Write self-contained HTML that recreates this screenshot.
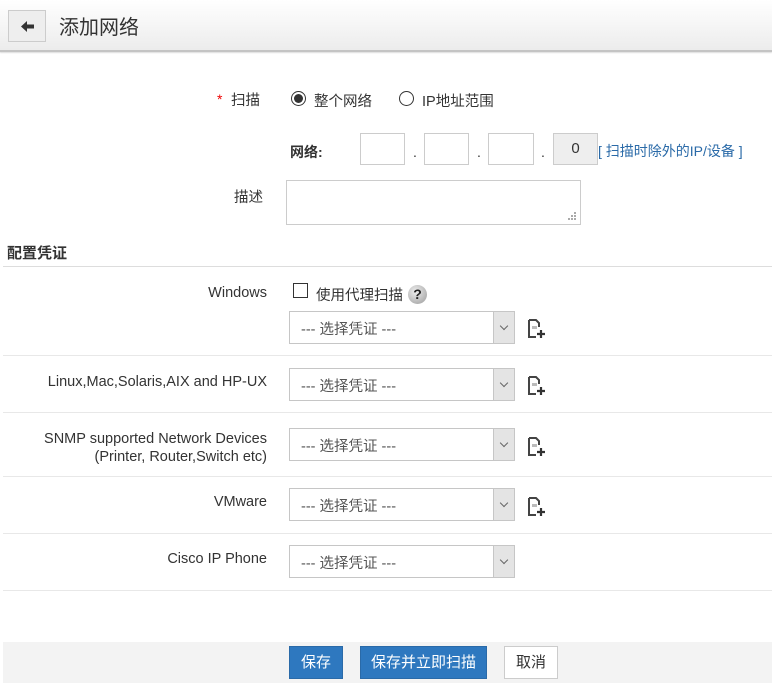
<!DOCTYPE html>
<html><head><meta charset="utf-8"><style>
*{box-sizing:border-box;margin:0;padding:0}
body{width:772px;height:683px;position:relative;background:#fff;font-family:"Liberation Sans","Noto Sans CJK SC",sans-serif;font-size:14px;color:#333;overflow:hidden}
.a{position:absolute}
.hdr{left:0;top:0;width:772px;height:52px;background:linear-gradient(#fff,#ececec);border-bottom:2px solid #c4c4c4;box-shadow:0 1px 1px #ddd}
.back{left:8px;top:10px;width:38px;height:32px;border:1px solid #ccc;background:#eee}
.lbl{text-align:right;width:267px;left:0;font-size:14.5px}
.box{border:1px solid #ccc;background:#fff}
.sel{width:226px;height:33px;border:1px solid #c6c6c6;background:#fff;color:#555;font-size:14.5px;padding:6px 0 0 11px}
.sel i{position:absolute;right:0;top:0;width:21px;height:31px;background:#e4e4e4;border-left:1px solid #c6c6c6}
.sel i:after{content:"";position:absolute;left:7px;top:11px;width:5px;height:5px;border-right:1px solid #666;border-bottom:1px solid #666;transform:rotate(45deg)}
.line{left:3px;width:769px;height:1px;background:#e8e8e8}
.btn{top:646px;height:33px;color:#fff;background:#2e78bf;border:1px solid #2a6aa8;font-size:15px;text-align:center;line-height:31px}
</style></head><body>
<div class="a hdr"></div>
<div class="a back"><svg width="38" height="32" viewBox="0 0 38 32"><path d="M12 15.5 L18 10 V13.5 H25 V17.5 H18 V21 Z" fill="#333"/></svg></div>
<div class="a" style="left:59px;top:11px;font-size:20px;color:#333">添加网络</div>

<div class="a" style="left:217px;top:91px;color:#e00;font-size:14px">*</div>
<div class="a" style="left:231px;top:89px;font-size:14.5px">扫描</div>
<div class="a" style="left:291px;top:91px;width:15px;height:15px;border:1px solid #333;border-radius:50%"><div style="position:absolute;left:2px;top:2px;width:9px;height:9px;border-radius:50%;background:#333"></div></div>
<div class="a" style="left:314px;top:90px;font-size:14.5px">整个网络</div>
<div class="a" style="left:399px;top:91px;width:15px;height:15px;border:1px solid #333;border-radius:50%"></div>
<div class="a" style="left:422px;top:90px;font-size:14.5px">IP地址范围</div>

<div class="a" style="left:290px;top:142px;font-weight:bold">网络:</div>
<div class="a box" style="left:360px;top:133px;width:45px;height:32px"></div>
<div class="a" style="left:413px;top:144px">.</div>
<div class="a box" style="left:424px;top:133px;width:45px;height:32px"></div>
<div class="a" style="left:477px;top:144px">.</div>
<div class="a box" style="left:488px;top:133px;width:46px;height:32px"></div>
<div class="a" style="left:541px;top:144px">.</div>
<div class="a box" style="left:553px;top:133px;width:45px;height:32px;background:#eee;text-align:center;line-height:30px;font-size:15px">0</div>
<div class="a" style="left:598px;top:141px;color:#2a6aa8;font-size:14px">[ 扫描时除外的IP/设备 ]</div>

<div class="a" style="left:234px;top:186px;font-size:14.5px">描述</div>
<div class="a box" style="left:286px;top:180px;width:295px;height:45px"><svg class="a" style="right:3px;bottom:3px" width="9" height="9"><g fill="#aaa"><rect x="6" y="0" width="2" height="2"/><rect x="3" y="3" width="2" height="2"/><rect x="6" y="3" width="2" height="2"/><rect x="0" y="6" width="2" height="2"/><rect x="3" y="6" width="2" height="2"/><rect x="6" y="6" width="2" height="2"/></g></svg></div>

<div class="a" style="left:7px;top:242px;font-weight:bold;font-size:15px">配置凭证</div>
<div class="a line" style="top:266px;background:#ddd"></div>

<div class="a lbl" style="top:285px">Windows</div>
<div class="a" style="left:293px;top:283px;width:15px;height:15px;border:1px solid #333"></div>
<div class="a" style="left:316px;top:284px;font-size:14.5px">使用代理扫描</div>
<div class="a" style="left:408px;top:285px;width:19px;height:19px;border-radius:50%;background:radial-gradient(circle at 40% 35%,#eee,#999);color:#222;font-weight:bold;font-size:14px;text-align:center;line-height:19px">?</div>
<div class="a sel" style="left:289px;top:311px">--- 选择凭证 ---<i></i></div>
<div class="a line" style="top:355px"></div>

<div class="a lbl" style="top:374px">Linux,Mac,Solaris,AIX and HP-UX</div>
<div class="a sel" style="left:289px;top:368px">--- 选择凭证 ---<i></i></div>
<div class="a line" style="top:412px"></div>

<div class="a lbl" style="top:430px;line-height:18px">SNMP supported Network Devices<br>(Printer, Router,Switch etc)</div>
<div class="a sel" style="left:289px;top:428px">--- 选择凭证 ---<i></i></div>
<div class="a line" style="top:476px"></div>

<div class="a lbl" style="top:494px">VMware</div>
<div class="a sel" style="left:289px;top:488px">--- 选择凭证 ---<i></i></div>
<div class="a line" style="top:533px"></div>

<div class="a lbl" style="top:551px">Cisco IP Phone</div>
<div class="a sel" style="left:289px;top:545px">--- 选择凭证 ---<i></i></div>
<div class="a line" style="top:590px"></div>

<svg class="a" style="left:527px;top:318px" width="20" height="22"><path d="M2 2H9L12 5V9M2 2V19H9" fill="none" stroke="#444" stroke-width="2"/><rect x="5" y="8" width="5" height="3" fill="#bbb"/><path d="M14 12V20M10 16H18" stroke="#333" stroke-width="2.2"/></svg>
<svg class="a" style="left:527px;top:375px" width="20" height="22"><path d="M2 2H9L12 5V9M2 2V19H9" fill="none" stroke="#444" stroke-width="2"/><rect x="5" y="8" width="5" height="3" fill="#bbb"/><path d="M14 12V20M10 16H18" stroke="#333" stroke-width="2.2"/></svg>
<svg class="a" style="left:527px;top:436px" width="20" height="22"><path d="M2 2H9L12 5V9M2 2V19H9" fill="none" stroke="#444" stroke-width="2"/><rect x="5" y="8" width="5" height="3" fill="#bbb"/><path d="M14 12V20M10 16H18" stroke="#333" stroke-width="2.2"/></svg>
<svg class="a" style="left:527px;top:496px" width="20" height="22"><path d="M2 2H9L12 5V9M2 2V19H9" fill="none" stroke="#444" stroke-width="2"/><rect x="5" y="8" width="5" height="3" fill="#bbb"/><path d="M14 12V20M10 16H18" stroke="#333" stroke-width="2.2"/></svg>

<div class="a" style="left:3px;top:642px;width:769px;height:41px;background:#f3f3f3"></div>
<div class="a btn" style="left:289px;width:54px">保存</div>
<div class="a btn" style="left:360px;width:127px">保存并立即扫描</div>
<div class="a btn" style="left:504px;width:54px;background:#fff;color:#333;border-color:#ccc">取消</div>
</body></html>
